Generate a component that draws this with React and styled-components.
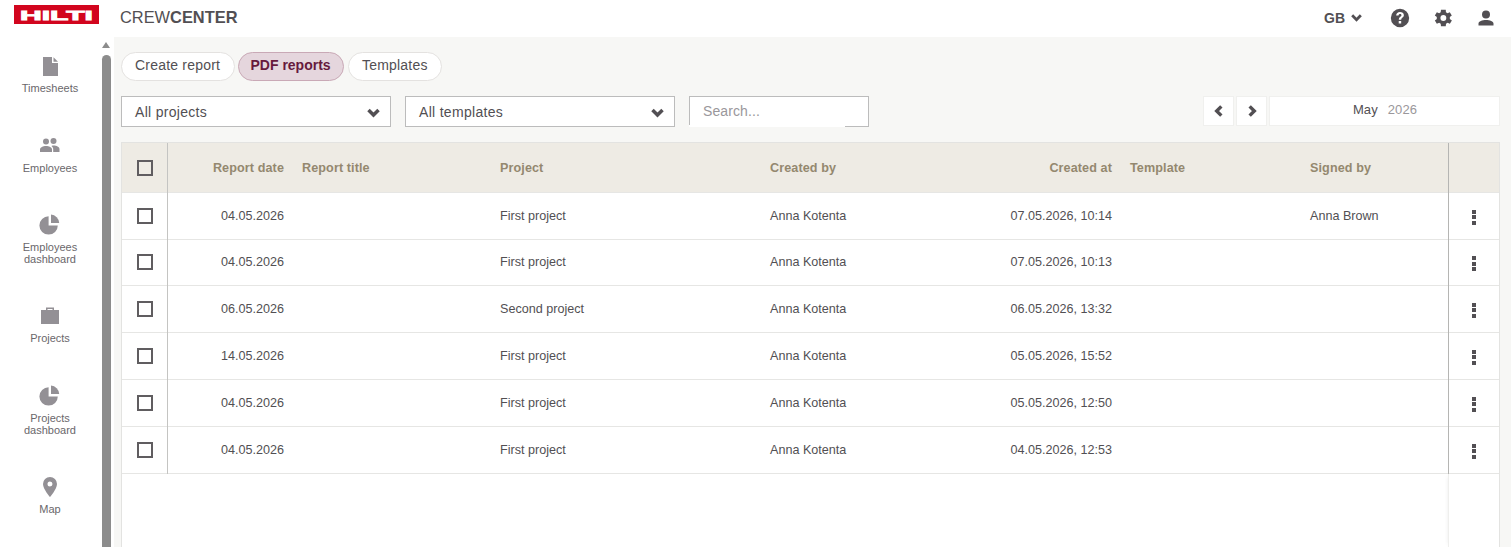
import React from "react";
import styled, { createGlobalStyle } from "styled-components";

const Global = createGlobalStyle`
  html, body { margin: 0; height: 100%; overflow: hidden; background: #fff; }
  body { font-family: "Liberation Sans", Arial, sans-serif; color: #524f53; }
`;
const Page = styled.div`display: flex; flex-direction: column; height: 547px; overflow: hidden;`;
const TopBar = styled.header`height: 37px; flex: none; display: flex; align-items: center; background: #fff; padding-left: 14px; padding-right: 15px; box-sizing: border-box;`;
const Logo = styled.svg`display: block; width: 85px; height: 19px; margin-top: -9px;`;
const AppName = styled.div`margin-left: 21px; font-size: 16.4px; color: #524f53; margin-top: -2px; b { font-weight: 700; }`;
const TopRight = styled.div`margin-left: auto; display: flex; align-items: center; margin-top: -2px;`;
const Lang = styled.div`display: flex; align-items: center; gap: 5px; font-size: 14px; font-weight: 700; margin-right: 26px;`;
const TopIcon = styled.svg`display: block; width: ${p => p.$w}px; height: ${p => p.$w}px; margin-left: ${p => p.$ml || 0}px; fill: #524f53;`;
const Body = styled.div`flex: 1; display: flex; min-height: 0;`;
const Side = styled.nav`width: 102px; flex: none; background: #fff; padding-top: 17px; box-sizing: border-box; overflow: hidden;`;
const SideItem = styled.div`height: ${p => p.$two ? 92 : 79}px; display: flex; flex-direction: column; align-items: center; font-size: 11px; line-height: 12px; color: #6a676b; text-align: center; padding-right: 2px; box-sizing: border-box;`;
const SideIcon = styled.svg`display: block; width: 24px; height: 24px; fill: #939095; margin-bottom: ${p => p.$gap ?? 4}px; flex: none;`;
const Track = styled.div`width: 12px; flex: none; background: #fff; padding-top: 5px; box-sizing: border-box; display: flex; flex-direction: column;`;
const Arrow = styled.div`width: 0; height: 0; border-left: 4.5px solid transparent; border-right: 4.5px solid transparent; border-bottom: 6px solid #8c8c8c; margin-bottom: 7px;`;
const Thumb = styled.div`width: 9px; flex: 1; background: #8c8c8c; border-radius: 5px 5px 0 0;`;
const Main = styled.main`flex: 1; background: #f7f7f5; padding: 15px 11px 0 7px; min-width: 0; display: flex; flex-direction: column;`;
const Tabs = styled.div`display: flex; gap: 3px; height: 29px;`;
const Tab = styled.div`height: 29px; box-sizing: border-box; border-radius: 15px; border: 1px solid ${p => p.$on ? "#c9a9b6" : "#e4e2e0"}; background: ${p => p.$on ? "#e5d6dd" : "#fff"}; color: ${p => p.$on ? "#671a3d" : "#524f53"}; font-weight: ${p => p.$on ? 700 : 400}; font-size: 14px; letter-spacing: ${p => p.$on ? 0 : .2}px; line-height: 25px; padding: 0 ${p => p.$on ? 11.5 : 13}px; width: ${p => p.$w}px; white-space: nowrap; &:last-child { margin-left: 1px; }`;
const Filters = styled.div`display: flex; margin-top: 15px; height: 31px;`;
const Select = styled.div`width: 270px; height: 31px; box-sizing: border-box; background: #fff; border: 1px solid #bcbcbc; display: flex; align-items: center; justify-content: space-between; padding: 1px 9px 0 13px; font-size: 14px; letter-spacing: .3px; margin-right: 14px;`;
const Search = styled.div`position: relative; width: 180px; height: 31px; box-sizing: border-box; background: #fff; border: 1px solid #bcbcbc; padding-left: 13px; font-size: 14px; line-height: 28px; color: #9a979b; letter-spacing: .1px; &::after { content: ""; position: absolute; left: -1px; bottom: -1px; width: 156px; height: 2px; background: #fff; }`;
const Pager = styled.div`margin-left: auto; display: flex; gap: 2px; height: 30px;`;
const PageBtn = styled.div`width: 31px; height: 30px; box-sizing: border-box; background: #fff; border: 1px solid #f0f0ee; display: flex; align-items: center; justify-content: center;`;
const Month = styled.div`width: 231px; height: 30px; box-sizing: border-box; background: #fff; border: 1px solid #f0f0ee; display: flex; justify-content: center; gap: 10px; font-size: 13px; line-height: 26px; padding-left: 1px; letter-spacing: .1px; span:last-child { color: #9a979b; }`;
const Table = styled.div`margin-top: 15px; flex: 1; background: #fff; border: 1px solid #e3e3e1; border-bottom: 0; position: relative;`;
const Row = styled.div`display: grid; grid-template-columns: 46px 125px 198px 270px 200px 160px 180px 147px 50px; height: ${p => p.$h}px; box-sizing: border-box; align-items: stretch; background: ${p => p.$head ? "#eeebe4" : "#fff"}; border-bottom: 1px solid #e6e6e4; font-size: 12.6px; font-weight: ${p => p.$head ? 700 : 400}; letter-spacing: ${p => p.$head ? .1 : 0}px; color: ${p => p.$head ? "#94886f" : "#524f53"};`;
const Cell = styled.div`display: flex; align-items: center; padding: 0 9px; justify-content: ${p => p.$right ? "flex-end" : "flex-start"}; white-space: nowrap; min-width: 0; margin-top: ${p => p.$head ? 0 : -1}px;`;
const CheckCell = styled.div`border-right: 1px solid #c4c4c2; display: flex; align-items: center; justify-content: center; margin-bottom: -1px;`;
const Check = styled.div`width: 16px; height: 16px; box-sizing: border-box; border: 2px solid #605d60; background: ${p => p.$head ? "transparent" : "#fff"}; margin-top: ${p => p.$head ? 0 : -2}px;`;
const ActionCell = styled.div`border-left: 1px solid #b5b5b3; display: flex; align-items: center; justify-content: center; margin-bottom: -1px;`;
const Dots = styled.div`display: flex; flex-direction: column; gap: 1.5px; margin-top: 1px; i { display: block; width: 4px; height: 4px; background: #524f53; }`;
const Rest = styled.div`position: absolute; top: 331px; bottom: 0; right: 0; width: 50px; border-left: 1px solid #efefed; box-shadow: -3px 0 4px -3px rgba(0,0,0,.08);`;

const rows = [
  [47, "04.05.2026", "First project", "07.05.2026, 10:14", "Anna Brown"],
  [46, "04.05.2026", "First project", "07.05.2026, 10:13", ""],
  [47, "06.05.2026", "Second project", "06.05.2026, 13:32", ""],
  [47, "14.05.2026", "First project", "05.05.2026, 15:52", ""],
  [47, "04.05.2026", "First project", "05.05.2026, 12:50", ""],
  [47, "04.05.2026", "First project", "04.05.2026, 12:53", ""],
];

const Chevron = ({ dir = "down", size = 12, weight = 2.6 }) => {
  const d = { down: "M2 4 L6 8 L10 4", left: "M8 2 L4 6 L8 10", right: "M4 2 L8 6 L4 10" }[dir];
  return <svg width={size} height={size} viewBox="0 0 12 12" fill="none" stroke="#524f53" strokeWidth={weight}><path d={d} /></svg>;
};
const Pie = () => (
  <SideIcon $gap={5} viewBox="0 0 24 24">
    <path d="M10.6 4.2v9.2h9.2A9.2 9.2 0 1 1 10.6 4.2z" />
    <path d="M13 2.6a9 9 0 0 1 8.2 8.4H13z" />
  </SideIcon>
);

export default function App() {
  return (
    <Page>
      <Global />
      <TopBar>
        <Logo viewBox="0 0 85 19" role="img" aria-label="Hilti">
          <rect width="85" height="19" fill="#d2051e" />
          <text x="42.5" y="14.500" textAnchor="middle" textLength="73" lengthAdjust="spacingAndGlyphs" fontFamily="Liberation Sans" fontWeight="700" fontSize="13.500" fill="#fff" stroke="#fff" strokeWidth=".8">HILTI</text>
        </Logo>
        <AppName>CREW<b>CENTER</b></AppName>
        <TopRight>
          <Lang>GB <Chevron size={13} /></Lang>
          <TopIcon $w={22} viewBox="0 0 24 24"><path d="M12 2a10 10 0 1 0 0 20 10 10 0 0 0 0-20zm1.3 16h-2.7v-2.6h2.7V18zm2.6-7.6c-.5.7-1.1 1.1-1.7 1.6-.6.5-.9 1-.9 2h-2.6c0-1.700.6-2.500 1.400-3.200.7-.6 1.500-1 1.500-1.900 0-.8-.6-1.300-1.500-1.300-1 0-1.600.6-1.700 1.600H7.800C8 6.900 9.600 5.500 12 5.500c2.300 0 4.200 1.200 4.200 3.300 0 .6-.1 1.100-.3 1.600z" /></TopIcon>
          <TopIcon $w={22} $ml={21} viewBox="0 0 24 24"><path d="M19.400 13c.1-.3.100-.7.100-1s0-.7-.1-1l2.200-1.600-2.200-3.800-2.500 1.100c-.5-.4-1.100-.8-1.700-1L15 3H9.800l-.3 2.700c-.6.2-1.200.6-1.700 1L5.300 5.600 3.100 9.400 5.300 11c-.1.3-.1.7-.1 1s0 .7.1 1l-2.200 1.600 2.200 3.800 2.500-1.100c.5.4 1.100.8 1.700 1l.3 2.700H15l.3-2.700c.6-.2 1.200-.6 1.700-1l2.500 1.100 2.200-3.800L19.400 13zM12.400 15.200a3.200 3.200 0 1 1 0-6.400 3.200 3.200 0 0 1 0 6.400z" /></TopIcon>
          <TopIcon $w={20} $ml={22} viewBox="0 0 24 24"><path d="M12 3a4.800 4.800 0 1 1 0 9.600A4.800 4.800 0 0 1 12 3zm0 11.500c4.500 0 9 1.700 9 4V21H3v-2.500c0-2.300 4.500-4 9-4z" /></TopIcon>
        </TopRight>
      </TopBar>
      <Body>
        <Side>
          <SideItem>
            <SideIcon viewBox="0 0 24 24"><path d="M5 3h9v6h6v13H5z" /><path d="M15.500 3.200 20 7.700h-4.500z" /></SideIcon>
            Timesheets
          </SideItem>
          <SideItem>
            <SideIcon $gap={5} viewBox="0 0 24 24"><circle cx="8" cy="8.500" r="3" /><circle cx="15.500" cy="8" r="3" /><path d="M2 19v-2.500c0-2 3-3.500 6-3.500s6 1.500 6 3.500V19z" /><path d="M15.200 19v-3c0-1.200-.6-2.300-1.700-3.100.7-.2 1.400-.3 2-.3 3 0 6 1.400 6 3.400v3z" /></SideIcon>
            Employees
          </SideItem>
          <SideItem $two><Pie />Employees<br />dashboard</SideItem>
          <SideItem>
            <SideIcon viewBox="0 0 24 24"><path d="M8 6V3.500h8V6h5v14H3V6zm1.500 0h5V5h-5z" fillRule="evenodd" /></SideIcon>
            Projects
          </SideItem>
          <SideItem $two><Pie />Projects<br />dashboard</SideItem>
          <SideItem>
            <SideIcon viewBox="0 0 24 24"><path d="M12 2a7 7 0 0 0-7 7c0 5 7 13 7 13s7-8 7-13a7 7 0 0 0-7-7zm0 9.500a2.500 2.500 0 1 1 0-5 2.500 2.500 0 0 1 0 5z" /></SideIcon>
            Map
          </SideItem>
        </Side>
        <Track><Arrow /><Thumb /></Track>
        <Main>
          <Tabs>
            <Tab $w={114}>Create report</Tab>
            <Tab $w={106} $on>PDF reports</Tab>
            <Tab $w={94}>Templates</Tab>
          </Tabs>
          <Filters>
            <Select>All projects <Chevron size={15} weight={2.8} /></Select>
            <Select>All templates <Chevron size={15} weight={2.8} /></Select>
            <Search>Search...</Search>
            <Pager>
              <PageBtn><Chevron dir="left" size={14} weight={2.9} /></PageBtn>
              <PageBtn><Chevron dir="right" size={14} weight={2.9} /></PageBtn>
              <Month><span>May</span><span>2026</span></Month>
            </Pager>
          </Filters>
          <Table>
            <Row $head $h={50}>
              <CheckCell><Check $head /></CheckCell>
              <Cell $head $right>Report date</Cell>
              <Cell $head>Report title</Cell>
              <Cell $head>Project</Cell>
              <Cell $head>Created by</Cell>
              <Cell $head $right>Created at</Cell>
              <Cell $head>Template</Cell>
              <Cell $head>Signed by</Cell>
              <ActionCell />
            </Row>
            {rows.map(([h, date, project, created, signed], i) => (
              <Row key={i} $h={h}>
                <CheckCell><Check /></CheckCell>
                <Cell $right>{date}</Cell>
                <Cell />
                <Cell>{project}</Cell>
                <Cell>Anna Kotenta</Cell>
                <Cell $right>{created}</Cell>
                <Cell />
                <Cell>{signed}</Cell>
                <ActionCell><Dots><i /><i /><i /></Dots></ActionCell>
              </Row>
            ))}
            <Rest />
          </Table>
        </Main>
      </Body>
    </Page>
  );
}
